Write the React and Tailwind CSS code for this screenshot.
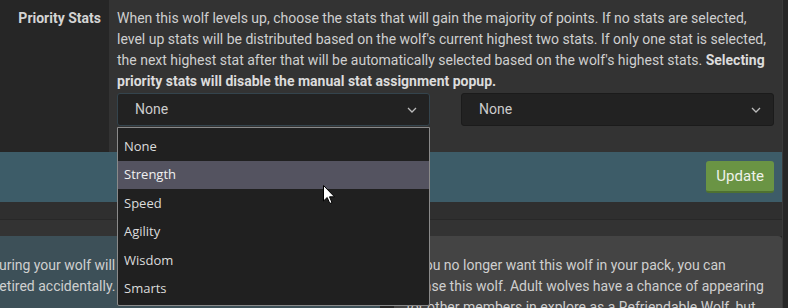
import React from "react";

const options = ["None", "Strength", "Speed", "Agility", "Wisdom", "Smarts"];

function Chevron() {
  return (
    <svg width="10" height="6" viewBox="0 0 10 6" className="text-[#bbb]">
      <path d="M1 1l4 4 4-4" fill="none" stroke="currentColor" strokeWidth="1.3" />
    </svg>
  );
}

function Select({ open }) {
  return (
    <div className="relative">
      <div
        className={
          "h-[33px] flex items-center justify-between pl-[17px] pr-[12px] bg-[#222] rounded-[3px] border text-[#ccc] text-[14px] " +
          (open ? "border-[#34444d]" : "border-[#1b1b1b]")
        }
      >
        <span>None</span>
        <Chevron />
      </div>
      {open && (
        <div className="absolute left-0 top-[34px] w-full z-10 bg-[#202020] border border-[#8a8a8a] rounded-b-[2px] pt-[4px] pb-[2px] font-['Open_Sans',sans-serif] text-[13px] text-[#dcdcdc]">
          {options.map((o) => (
            <div
              key={o}
              className={
                "h-[28.5px] flex items-center px-[6px] " +
                (o === "Strength" ? "bg-[#545360] text-[#f0f0f0]" : "")
              }
            >
              {o}
            </div>
          ))}
        </div>
      )}
    </div>
  );
}

const App = () => {
  return (
    <div className="relative w-[788px] h-[308px] overflow-hidden bg-[#262626] font-['Roboto',sans-serif] text-[14px] leading-[21px] text-[#cfcfcf]">
      <div className="w-[783px] border-r border-[#3a3a3a]">
        <div className="flex">
          <div className="w-[109px] shrink-0 bg-[#262626] pt-[8px] pr-[8px] text-right font-bold text-[#d4d4d4]">
            Priority Stats
          </div>
          <div className="flex-1 bg-[#333] pt-[8px] pl-[8px] pr-[8px] pb-[26px]">
            <p>
              When this wolf levels up, choose the stats that will gain the majority of points. If no stats are
              selected, level up stats will be distributed based on the wolf's current highest two stats. If only one
              stat is selected, the next highest stat after that will be automatically selected based on the wolf's
              highest stats.{" "}
              <b className="text-[#dcdcdc]">Selecting priority stats will disable the manual stat assignment popup.</b>
            </p>
            <div className="grid grid-cols-2 gap-[31px] mt-[1px]">
              <Select open />
              <Select />
            </div>
          </div>
        </div>

        <div className="h-[50px] bg-[#3d5c68] flex items-center justify-end pr-[8px]">
          <button className="h-[32px] px-[10px] bg-[#6a9444] border-b-2 border-[#4e7131] rounded-[3px] text-[15px] text-[#eef2ea]">
            Update
          </button>
        </div>

        <div className="h-[18px] bg-[#2f2f2f] border-b border-[#282828]" />
        <div className="h-[16px] bg-[#333]" />

        <div className="flex gap-[14px] h-[72px]">
          <div className="w-[380px] bg-[#3d5058] overflow-hidden pt-[19px] whitespace-nowrap">
            <div className="-ml-[24px]">
              <div>Ensuring your wolf will not be</div>
              <div>be retired accidentally.</div>
              <div>.</div>
            </div>
          </div>
          <div className="flex-1 bg-[#444] rounded-t-[4px] pt-[19px] pl-[12px] whitespace-nowrap">
            <div>If you no longer want this wolf in your pack, you can</div>
            <div className="-ml-[5px]">release this wolf. Adult wolves have a chance of appearing</div>
            <div>for other members in explore as a Refriendable Wolf, but</div>
          </div>
        </div>
      </div>

      <svg
        className="absolute left-[323px] top-[185px] z-20"
        width="13"
        height="20"
        viewBox="0 0 13 20"
      >
        <path
          d="M0.5 0.5 L0.5 16 L4.2 12.5 L6.8 18.5 L9 17.6 L6.5 11.8 L11.5 11.8 Z"
          fill="#fff"
          stroke="#000"
          strokeWidth="1"
          strokeLinejoin="round"
        />
      </svg>
    </div>
  );
};

export default App;
